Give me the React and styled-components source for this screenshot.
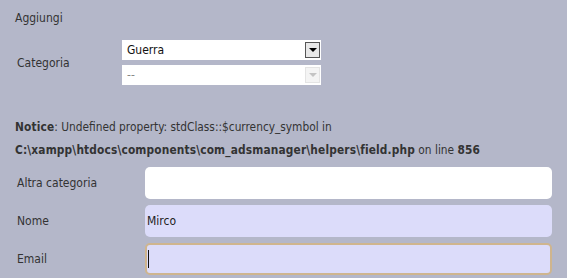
import React from "react"
import styled, { createGlobalStyle } from 'styled-components'

const GlobalStyle = createGlobalStyle`
  html, body {
    margin: 0;
    padding: 0;
    background: #b4b7c9;
  }
  body {
    font-family: "DejaVu Sans Condensed", "DejaVu Sans", sans-serif;
    font-stretch: condensed;
    font-size: 12px;
    color: #333;
  }
`;

const Page = styled.div`
  width: 567px;
  height: 278px;
  overflow: hidden;
  padding: 0 15px 0 15px;
  box-sizing: border-box;
`;

const Title = styled.div`
  padding-top: 10px;
  height: 16px;
  line-height: 16px;
`;

const CategoryRow = styled.div`
  display: flex;
  align-items: center;
  margin-top: 14px;
`;

const Label = styled.div`
  width: ${p => p.width}px;
  padding-left: 2px;
  flex-shrink: 0;
`;

const SelectStack = styled.div`
  display: flex;
  flex-direction: column;
  gap: 5px;
`;

const SelectBox = styled.div`
  width: 199px;
  height: 20px;
  background: #fff;
  display: flex;
  align-items: center;
  justify-content: space-between;
  box-sizing: border-box;
  padding: 0 1px 0 5px;
  color: ${p => p.disabled ? '#888' : '#111'};
`;

const ArrowBox = styled.div`
  width: 15px;
  height: 16px;
  box-sizing: border-box;
  border: 1px solid ${p => p.disabled ? '#e4e4e4' : '#555'};
  background: ${p => p.disabled ? '#f4f4f4' : '#e8e8e8'};
  display: flex;
  align-items: center;
  justify-content: center;
  &::after {
    content: "";
    border-left: 4px solid transparent;
    border-right: 4px solid transparent;
    border-top: 4px solid ${p => p.disabled ? '#c4c4c4' : '#000'};
  }
`;

const Notice = styled.div`
  margin-top: 31px;
  line-height: 23px;
  font-size: 11.8px;
  b {
    font-weight: bold;
    letter-spacing: 0.15px;
  }
`;

const Form = styled.div`
  margin-top: 5px;
  display: flex;
  flex-direction: column;
  gap: 6px;
`;

const FormRow = styled.div`
  display: flex;
  align-items: center;
`;

const TextInput = styled.div`
  flex: 1;
  height: 32px;
  box-sizing: border-box;
  border-radius: 5px;
  background: ${p => p.variant === 'white' ? '#fff' : '#dcdcfa'};
  border: 2px solid ${p => p.focused ? '#cfb58e' : 'transparent'};
  display: flex;
  align-items: center;
  padding-left: 0;
  color: #222;
`;

const Caret = styled.span`
  display: inline-block;
  width: 1px;
  height: 18px;
  background: #111;
  margin-left: 1px;
`;

export default function App() {
  return (
    <Page>
      <GlobalStyle />
      <Title>Aggiungi</Title>
      <CategoryRow>
        <Label width={105}>Categoria</Label>
        <SelectStack>
          <SelectBox>
            <span>Guerra</span>
            <ArrowBox />
          </SelectBox>
          <SelectBox disabled>
            <span>--</span>
            <ArrowBox disabled />
          </SelectBox>
        </SelectStack>
      </CategoryRow>
      <Notice>
        <div><b>Notice</b>: Undefined property: stdClass::$currency_symbol in</div>
        <div><b>C:\xampp\htdocs\components\com_adsmanager\helpers\field.php</b> on line <b>856</b></div>
      </Notice>
      <Form>
        <FormRow>
          <Label width={128}>Altra categoria</Label>
          <TextInput variant="white" />
        </FormRow>
        <FormRow>
          <Label width={128}>Nome</Label>
          <TextInput>Mirco</TextInput>
        </FormRow>
        <FormRow>
          <Label width={128}>Email</Label>
          <TextInput focused><Caret /></TextInput>
        </FormRow>
      </Form>
    </Page>
  )
}
